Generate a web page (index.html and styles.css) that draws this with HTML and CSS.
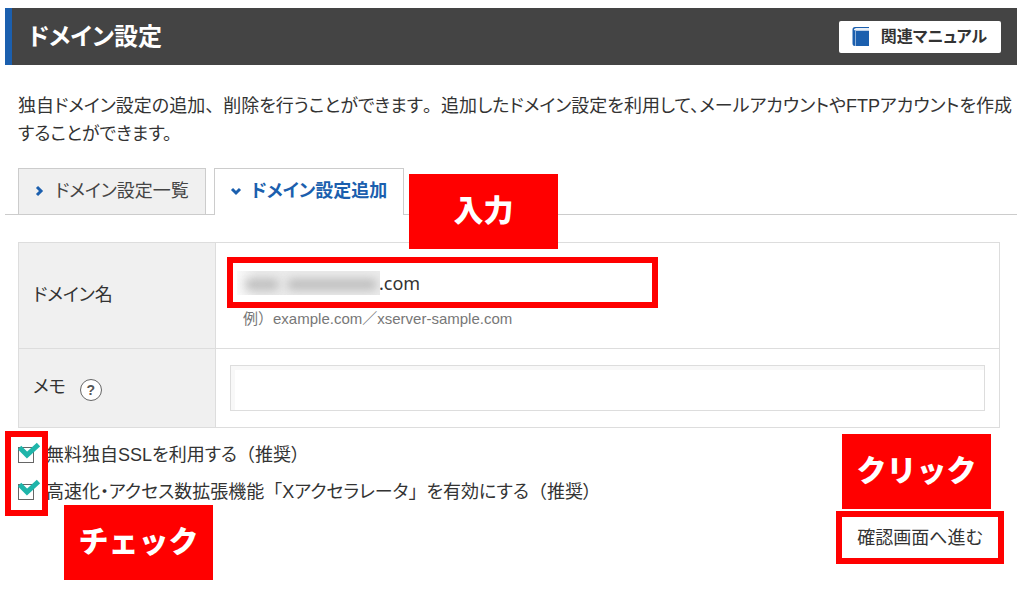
FILE: index.html
```html
<!DOCTYPE html>
<html lang="ja">
<head>
<meta charset="utf-8">
<meta name="viewport" content="width=device-width, initial-scale=1">
<title>ドメイン設定</title>
<link rel="stylesheet" href="styles.css">
</head>
<body>
<header class="page-header">
  <h1 class="page-title">ドメイン設定</h1>
  <a class="manual-link" href="#">
    <svg class="manual-icon" width="18" height="20" viewBox="0 0 18 20" aria-hidden="true">
      <path d="M3 0H17V1.500H3.500Q2 1.500 2 2.500T3.500 3.500H17V19H3Q0.500 19 0.500 16.500V2.500Q0.500 0 3 0Z" fill="#1b5fae"/>
      <path d="M3.500 1H17V3.500H3.500Z" fill="#e8eff7"/>
      <path d="M3.500 3.500V19" stroke="#8eb2da" stroke-width="1"/>
    </svg>
    <span>関連マニュアル</span>
  </a>
</header>
<main>
  <p class="intro">独自ドメイン設定の追加<span class="full">、</span>削除を行うことができます<span class="full">。</span>追加したドメイン設定を利用して、メールアカウントやFTPアカウントを作成することができます。</p>
  <nav class="tabs">
    <a class="tab" href="#">
      <svg width="12" height="12" viewBox="0 0 12 12" aria-hidden="true"><path d="M3 2L7 6L3 10" fill="none" stroke="#1b5fae" stroke-width="3"/></svg>
      <span>ドメイン設定一覧</span>
    </a>
    <a class="tab tab-active" href="#" aria-current="page">
      <svg width="12" height="12" viewBox="0 0 12 12" aria-hidden="true"><path d="M2 4L6 8L10 4" fill="none" stroke="#1b5fae" stroke-width="3"/></svg>
      <span>ドメイン設定追加</span>
    </a>
    <span class="callout callout-input">入力</span>
  </nav>
  <form class="domain-form">
    <table class="fields">
      <tr class="row-domain">
        <th scope="row"><label for="domain">ドメイン名</label></th>
        <td>
          <div class="domain-box">
            <input class="domain-input" id="domain" type="text" value=".com">
            <span class="redaction" aria-hidden="true"><span class="smudge smudge-a"></span><span class="smudge smudge-b"></span></span>
          </div>
          <p class="hint">例<span class="full">）</span>example.com／xserver-sample.com</p>
        </td>
      </tr>
      <tr class="row-memo">
        <th scope="row"><div class="memo-label"><label for="memo">メモ</label><button class="help" type="button" aria-label="ヘルプ">?</button></div></th>
        <td><input class="memo-input" id="memo" type="text"></td>
      </tr>
    </table>
    <div class="form-footer">
      <div class="options">
        <div class="option">
          <span class="check"><input type="checkbox" id="ssl" checked><svg width="22" height="18" viewBox="0 0 22 18" aria-hidden="true"><path d="M1.500 5.500L9 13L20.500 2.500" fill="none" stroke="#1fb5aa" stroke-width="5"/></svg></span>
          <label for="ssl">無料独自SSLを利用する<span class="full">（</span>推奨）</label>
        </div>
        <div class="option">
          <span class="check"><input type="checkbox" id="accel" checked><svg width="22" height="18" viewBox="0 0 22 18" aria-hidden="true"><path d="M1.500 5.500L9 13L20.500 2.500" fill="none" stroke="#1fb5aa" stroke-width="5"/></svg></span>
          <label for="accel">高速化・アクセス数拡張機能<span class="full">「</span>Xアクセラレータ<span class="full">」</span>を有効にする<span class="full">（</span>推奨）</label>
        </div>
        <span class="check-frame"></span>
        <span class="callout callout-check">チェック</span>
      </div>
      <div class="actions">
        <span class="callout callout-click">クリック</span>
        <button class="submit" type="submit">確認画面へ進む</button>
      </div>
    </div>
  </form>
</main>
</body>
</html>
```

FILE: styles.css
```css
* { box-sizing: border-box; }

body {
  min-height: 100vh;
  margin: 0;
  padding: 8px 7px 8px 5px;
  background: #fff;
  color: #333;
  font-family: "Liberation Sans", "Noto Sans CJK JP", sans-serif;
  font-size: 18px;
  line-height: 28px;
  font-feature-settings: "palt";
}

input, button { font: inherit; color: inherit; font-feature-settings: inherit; }
svg { display: block; flex: none; }

/* punctuation that keeps its full-width box */
.full { font-feature-settings: normal; }

.page-header {
  display: flex;
  align-items: center;
  justify-content: space-between;
  height: 57px;
  padding: 0 16px;
  border-left: 7px solid #1b5fae;
  background: #444;
}

.page-title { margin: 0; color: #fff; font-size: 24px; font-weight: 700; }

.manual-link {
  display: flex;
  align-items: center;
  gap: 11px;
  height: 32px;
  padding: 0 14px 0 13px;
  border-radius: 2px;
  background: #fff;
  color: #333;
  font-size: 16px;
  font-weight: 700;
  text-decoration: none;
}

.intro { margin: 27px 0 20px; padding-left: 13px; }

.tabs {
  position: relative;
  display: flex;
  gap: 8px;
  height: 47px;
  padding-left: 13px;
  border-bottom: 1px solid #ccc;
}

.tab {
  display: flex;
  align-items: center;
  gap: 9px;
  height: 46px;
  padding: 0 16px 2px 15px;
  border: 1px solid #ccc;
  border-bottom: 0;
  background: #f0f0f0;
  color: #444;
  text-decoration: none;
}

.tab-active { height: 47px; background: #fff; color: #1b5fae; font-weight: 700; }

.callout {
  display: flex;
  align-items: center;
  justify-content: center;
  width: 149px;
  height: 75px;
  padding-bottom: 2px;
  background: #f00;
  color: #fff;
  font-size: 30px;
  font-weight: 900;
  font-feature-settings: normal;
}

.callout-input { position: absolute; left: 404px; top: 6px; z-index: 1; }

.domain-form { margin: 27px 12px 0 13px; padding-right: 5px; }

.fields { width: 100%; border-collapse: collapse; table-layout: fixed; }
.fields th, .fields td { border: 1px solid #ddd; padding: 0 14px; text-align: left; }
.fields th { width: 197px; padding-bottom: 2px; background: #f0f0f0; font-weight: 400; }
.row-domain { height: 106px; }
.fields .row-domain td { padding: 14px 11px; vertical-align: top; }
.row-memo { height: 79px; }

.domain-box { position: relative; width: 431px; max-width: 100%; }

.domain-input {
  display: block;
  width: 100%;
  height: 51px;
  padding: 0 8px 0 146px;
  border: 6px solid #f00;
  background: #fff;
  font-family: "Noto Sans", sans-serif;
}

.redaction {
  position: absolute;
  left: 10px;
  top: 14px;
  width: 143px;
  height: 24px;
  overflow: hidden;
  background: linear-gradient(90deg, #fafafa, #ebebeb 20px);
}
.smudge { position: absolute; top: 8px; height: 11px; border-radius: 5px; background: #bcbcbc; filter: blur(5px); }
.smudge-a { left: 8px; width: 34px; }
.smudge-b { left: 50px; width: 90px; }

.hint { margin: 0 0 0 16px; color: #777; font-size: 15px; line-height: 22px; }

.memo-label { display: flex; align-items: center; gap: 14px; }

.help {
  width: 22px;
  height: 22px;
  margin-top: 6px;
  padding: 0;
  border: 1px solid #666;
  border-radius: 50%;
  background: #fff;
  color: #555;
  font-size: 14px;
  font-weight: 700;
  line-height: 18px;
}

.memo-input {
  display: block;
  width: 100%;
  height: 46px;
  padding: 0 8px;
  border: 1px solid #ddd;
  background: #fff;
  box-shadow: inset 4px 4px 0 #f8f8f8;
}

.form-footer { display: flex; justify-content: space-between; }

.options { position: relative; display: flex; flex-direction: column; gap: 9px; padding-top: 13px; }
.option { display: flex; align-items: center; gap: 4px; height: 28px; }
.check { position: relative; width: 24px; height: 16px; }
.check input {
  display: block;
  appearance: none;
  width: 16px;
  height: 16px;
  margin: 0;
  border: 1px solid #666;
  background: #fff;
}
.check svg { position: absolute; left: 0; top: -5px; pointer-events: none; }

.check-frame {
  position: absolute;
  left: -13px;
  top: 3px;
  width: 43px;
  height: 85px;
  border: 6px solid #f00;
  pointer-events: none;
}

.callout-check { position: absolute; left: 46px; top: 77px; }

.actions { display: flex; flex-direction: column; gap: 2px; margin-right: -4px; padding-top: 6px; }
.callout-click { margin-left: 6px; }

.submit {
  width: 168px;
  height: 53px;
  padding: 0;
  border: 6px solid #f00;
  background: #fff;
}
```
